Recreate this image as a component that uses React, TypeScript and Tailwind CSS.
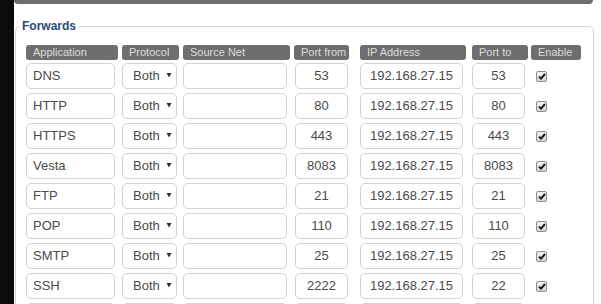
import React from 'react';

type Forward = {
  app: string;
  from: string;
  ip: string;
  to: string;
};

const forwards: Forward[] = [
  { app: 'DNS', from: '53', ip: '192.168.27.15', to: '53' },
  { app: 'HTTP', from: '80', ip: '192.168.27.15', to: '80' },
  { app: 'HTTPS', from: '443', ip: '192.168.27.15', to: '443' },
  { app: 'Vesta', from: '8083', ip: '192.168.27.15', to: '8083' },
  { app: 'FTP', from: '21', ip: '192.168.27.15', to: '21' },
  { app: 'POP', from: '110', ip: '192.168.27.15', to: '110' },
  { app: 'SMTP', from: '25', ip: '192.168.27.15', to: '25' },
  { app: 'SSH', from: '2222', ip: '192.168.27.15', to: '22' },
  { app: '', from: '', ip: '', to: '' },
];

const box =
  'h-[26px] rounded-[5px] border border-[#d2d2d2] bg-white text-[13px] text-[#4a4a4a] flex items-center';

const Header: React.FC<{ w: string; children: React.ReactNode }> = ({ w, children }) => (
  <div className={`${w} h-[15px] rounded-[3px] bg-[#6e6e6e] pl-[7px] text-[11px] leading-[15px] text-[#dcdcdc]`}>
    {children}
  </div>
);

const Checkbox: React.FC = () => (
  <div className="ml-[5px] flex h-[11px] w-[11px] items-center justify-center rounded-[2px] border border-[#8e8e8e] bg-gradient-to-b from-[#f2f2f2] to-[#d6d6d6]">
    <svg width="8" height="7" viewBox="0 0 8 7">
      <path d="M1 3.6 L3 5.6 L7 1" fill="none" stroke="#1c1c1c" strokeWidth="2" />
    </svg>
  </div>
);

export default function App() {
  return (
    <div
      className="flex h-[304px] w-[601px] overflow-hidden bg-white"
      style={{ fontFamily: '"Liberation Sans", Arial, sans-serif' }}
    >
      <div className="w-[14px] shrink-0 bg-[#0b0b0b]" />
      <div className="flex-1 pr-[7px]">
        <div className="mr-px h-[4px] rounded-b-[5px] bg-[#6f6f6f]" />
        <fieldset className="ml-px mt-[14px] rounded-[5px] border border-[#d4d4d4] pl-[3px] pt-[11px]">
          <legend className="px-[3px] text-[12px] font-bold leading-[16px] text-[#2b4a7b]">Forwards</legend>
          <div className="ml-[7px]">
            <div className="mb-[3px] grid grid-cols-[96px_61px_111px_66px_112px_59px_50px]">
              <Header w="w-[92px]">Application</Header>
              <Header w="w-[57px]">Protocol</Header>
              <Header w="w-[107px]">Source Net</Header>
              <Header w="w-[55px]">Port from</Header>
              <Header w="w-[106px]">IP Address</Header>
              <Header w="w-[56px]">Port to</Header>
              <Header w="w-[50px]">Enable</Header>
            </div>
            {forwards.map((f, i) => (
              <div key={i} className="mb-[4px] grid grid-cols-[96px_61px_111px_66px_112px_59px_50px] items-center">
                <div className={`${box} w-[89px] pl-[6px]`}>{f.app}</div>
                <div className={`${box} w-[55px] justify-between pl-[10px] pr-[4px]`}>
                  <span>{f.app ? 'Both' : ''}</span>
                  <svg width="6" height="6" viewBox="0 0 6 6" className="-mt-[2px]">
                    <path d="M0.5 1 L5.5 1 L3 5.5 Z" fill="#2e2e2e" />
                  </svg>
                </div>
                <div className={`${box} w-[104px]`} />
                <div className={`${box} ml-px w-[53px] justify-center`}>{f.from}</div>
                <div className={`${box} w-[103px] justify-center`}>{f.ip}</div>
                <div className={`${box} w-[53px] justify-center`}>{f.to}</div>
                <div>{f.app && <Checkbox />}</div>
              </div>
            ))}
          </div>
        </fieldset>
      </div>
    </div>
  );
}
